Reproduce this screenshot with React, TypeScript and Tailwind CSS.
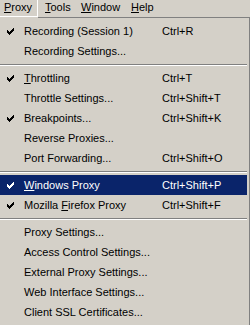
import React from "react";

type Item =
  | { sep: true }
  | {
      sep?: false;
      label: React.ReactNode;
      shortcut?: string;
      checked?: boolean;
      active?: boolean;
    };

function U({ children }: { children: React.ReactNode }) {
  return <span className="underline decoration-1 underline-offset-[1px]">{children}</span>;
}

function Check({ color }: { color: string }) {
  // classic 7x7 menu check
  const px = [
    [6, 0],
    [5, 1], [6, 1],
    [0, 2], [4, 2], [5, 2], [6, 2],
    [0, 3], [1, 3], [3, 3], [4, 3], [5, 3],
    [0, 4], [1, 4], [2, 4], [3, 4], [4, 4],
    [1, 5], [2, 5], [3, 5],
    [2, 6],
  ];
  return (
    <svg width="7" height="7" viewBox="0 0 7 7" shapeRendering="crispEdges">
      {px.map(([x, y], i) => (
        <rect key={i} x={x} y={y} width="1" height="1" fill={color} />
      ))}
    </svg>
  );
}

const ITEMS: Item[] = [
  { label: "Recording (Session 1)", shortcut: "Ctrl+R", checked: true },
  { label: "Recording Settings..." },
  { sep: true },
  { label: <><U>T</U>hrottling</>, shortcut: "Ctrl+T", checked: true },
  { label: "Throttle Settings...", shortcut: "Ctrl+Shift+T" },
  { label: "Breakpoints...", shortcut: "Ctrl+Shift+K", checked: true },
  { label: "Reverse Proxies..." },
  { label: "Port Forwarding...", shortcut: "Ctrl+Shift+O" },
  { sep: true },
  { label: <><U>W</U>indows Proxy</>, shortcut: "Ctrl+Shift+P", checked: true, active: true },
  { label: <>Mozilla <U>F</U>irefox Proxy</>, shortcut: "Ctrl+Shift+F", checked: true },
  { sep: true },
  { label: "Proxy Settings..." },
  { label: "Access Control Settings..." },
  { label: "External Proxy Settings..." },
  { label: "Web Interface Settings..." },
  { label: "Client SSL Certificates..." },
];

export default function App() {
  return (
    <div
      className="w-[250px] h-[325px] overflow-hidden bg-[#d4d0c8] text-[11px] text-black"
      style={{ fontFamily: '"Liberation Sans", Arial, sans-serif' }}
    >
      {/* menu bar */}
      <div className="flex items-start h-[18px]">
        <div className="w-[38px] h-[17px] border-r border-b border-white pl-[4px] leading-[15px]">
          <U>P</U>roxy
        </div>
        <div className="flex-1 h-[18px] border-b border-[#808080] flex leading-[15px]">
          <div className="w-[37px] pl-[7px]">
            <U>T</U>ools
          </div>
          <div className="w-[50px] pl-[6px]">
            <U>W</U>indow
          </div>
          <div className="pl-[6px]">
            <U>H</U>elp
          </div>
        </div>
      </div>

      {/* dropdown */}
      <div className="h-[307px] border-r border-[#808080] pr-[2px] pt-[3px]">
        {ITEMS.map((it, i) =>
          it.sep ? (
            <div key={i} className="h-[7px] pt-[3px]">
              <div className="h-px bg-[#808080]" />
              <div className="h-px bg-white" />
            </div>
          ) : (
            <div
              key={i}
              className={`flex items-center h-[20px] ${
                it.active ? "bg-[#0a246a] text-white" : ""
              }`}
            >
              <div className="w-[24px] pl-[7px] flex items-center">
                {it.checked && <Check color={it.active ? "#ffffff" : "#000000"} />}
              </div>
              <div className="w-[138px] whitespace-nowrap">{it.label}</div>
              <div className="whitespace-nowrap">{it.shortcut}</div>
            </div>
          )
        )}
      </div>
    </div>
  );
}
